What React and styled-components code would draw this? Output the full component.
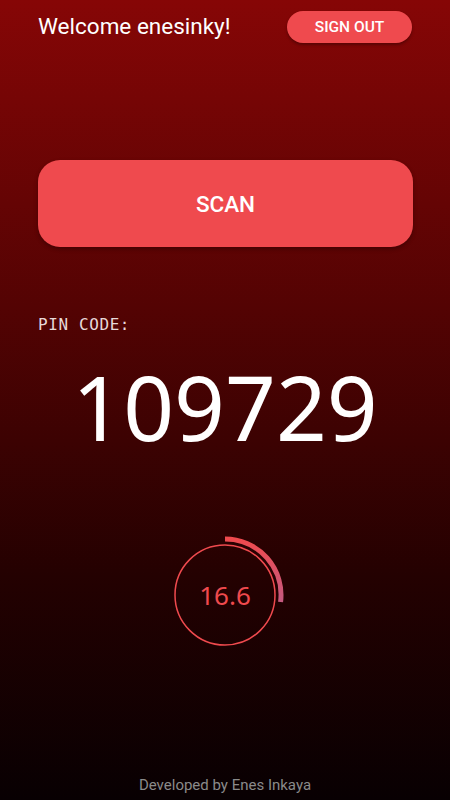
import React from "react"
import styled, { createGlobalStyle } from "styled-components"

const GlobalStyle = createGlobalStyle`
  html, body {
    margin: 0;
    padding: 0;
    background: #080002;
  }
  * {
    box-sizing: border-box;
  }
`

const Timer = ({ value, progress }) => {
  const r = 56
  const a = progress * 2 * Math.PI
  const ex = 65 + r * Math.sin(a)
  const ey = 65 - r * Math.cos(a)
  const large = progress > 0.5 ? 1 : 0
  return (
    <TimerWrapper>
      <svg width="130" height="130" viewBox="0 0 130 130">
        <defs>
          <linearGradient id="arcGrad" gradientUnits="userSpaceOnUse" x1="65" y1="9" x2="65" y2={ey}>
            <stop offset="0%" stopColor="#ef4a4e" />
            <stop offset="100%" stopColor="#c55a80" />
          </linearGradient>
        </defs>
        <circle cx="65" cy="65" r="50" fill="none" stroke="#ef4a4e" strokeWidth="1.5" />
        <path
          d={`M 65 ${65 - r} A ${r} ${r} 0 ${large} 1 ${ex} ${ey}`}
          fill="none"
          stroke="url(#arcGrad)"
          strokeWidth="5"
        />
      </svg>
      <TimerValue>{value}</TimerValue>
    </TimerWrapper>
  )
}

const App = () => {
  return (
    <>
      <GlobalStyle />
      <Screen>
        <Header>
          <Welcome>Welcome enesinky!</Welcome>
          <SignOutButton>SIGN OUT</SignOutButton>
        </Header>
        <ScanButton>SCAN</ScanButton>
        <PinLabel>PIN CODE:</PinLabel>
        <PinCode>109729</PinCode>
        <Timer value="16.6" progress={0.27} />
        <Footer>Developed by Enes Inkaya</Footer>
      </Screen>
    </>
  )
}

const Screen = styled.div`
  width: 450px;
  height: 800px;
  display: flex;
  flex-direction: column;
  padding: 11px 38px 0 38px;
  background: linear-gradient(to bottom, #860606 0%, #540303 38%, #240101 72%, #080002 100%);
  font-family: Roboto, "Liberation Sans", sans-serif;
`
const Header = styled.div`
  display: flex;
  align-items: center;
  justify-content: space-between;
  height: 32px;
`
const Welcome = styled.div`
  color: #ffffff;
  font-size: 22.5px;
  margin-top: -2px;
`
const SignOutButton = styled.button`
  width: 125px;
  height: 32px;
  border: none;
  border-radius: 16px;
  background: #ef4a4e;
  color: #ffffff;
  font-family: Roboto, sans-serif;
  font-size: 15.5px;
  font-weight: 500;
  box-shadow: 0 2px 3px rgba(0, 0, 0, 0.3);
`
const ScanButton = styled.button`
  margin-top: 117px;
  height: 87px;
  width: 375px;
  border: none;
  border-radius: 22px;
  background: #ef4a4e;
  color: #ffffff;
  font-family: Roboto, sans-serif;
  font-size: 22.5px;
  font-weight: 500;
  box-shadow: 0 2px 4px rgba(0, 0, 0, 0.3);
`
const PinLabel = styled.div`
  margin-top: 68px;
  color: #e6d9d9;
  font-family: "DejaVu Sans Mono", monospace;
  font-size: 16px;
  letter-spacing: 0.6px;
`
const PinCode = styled.div`
  margin-top: 20px;
  text-align: center;
  color: #ffffff;
  font-family: "Noto Sans", sans-serif;
  font-size: 89px;
  line-height: 1.2;
`
const TimerWrapper = styled.div`
  position: relative;
  align-self: center;
  margin-top: 69px;
  width: 130px;
  height: 130px;
`
const TimerValue = styled.div`
  position: absolute;
  inset: 0;
  display: flex;
  align-items: center;
  justify-content: center;
  color: #ef4a4e;
  font-family: "Noto Sans", sans-serif;
  font-size: 26px;
`
const Footer = styled.div`
  margin-top: auto;
  margin-bottom: 6px;
  text-align: center;
  color: #8a8a8a;
  font-size: 15px;
`

export default App
